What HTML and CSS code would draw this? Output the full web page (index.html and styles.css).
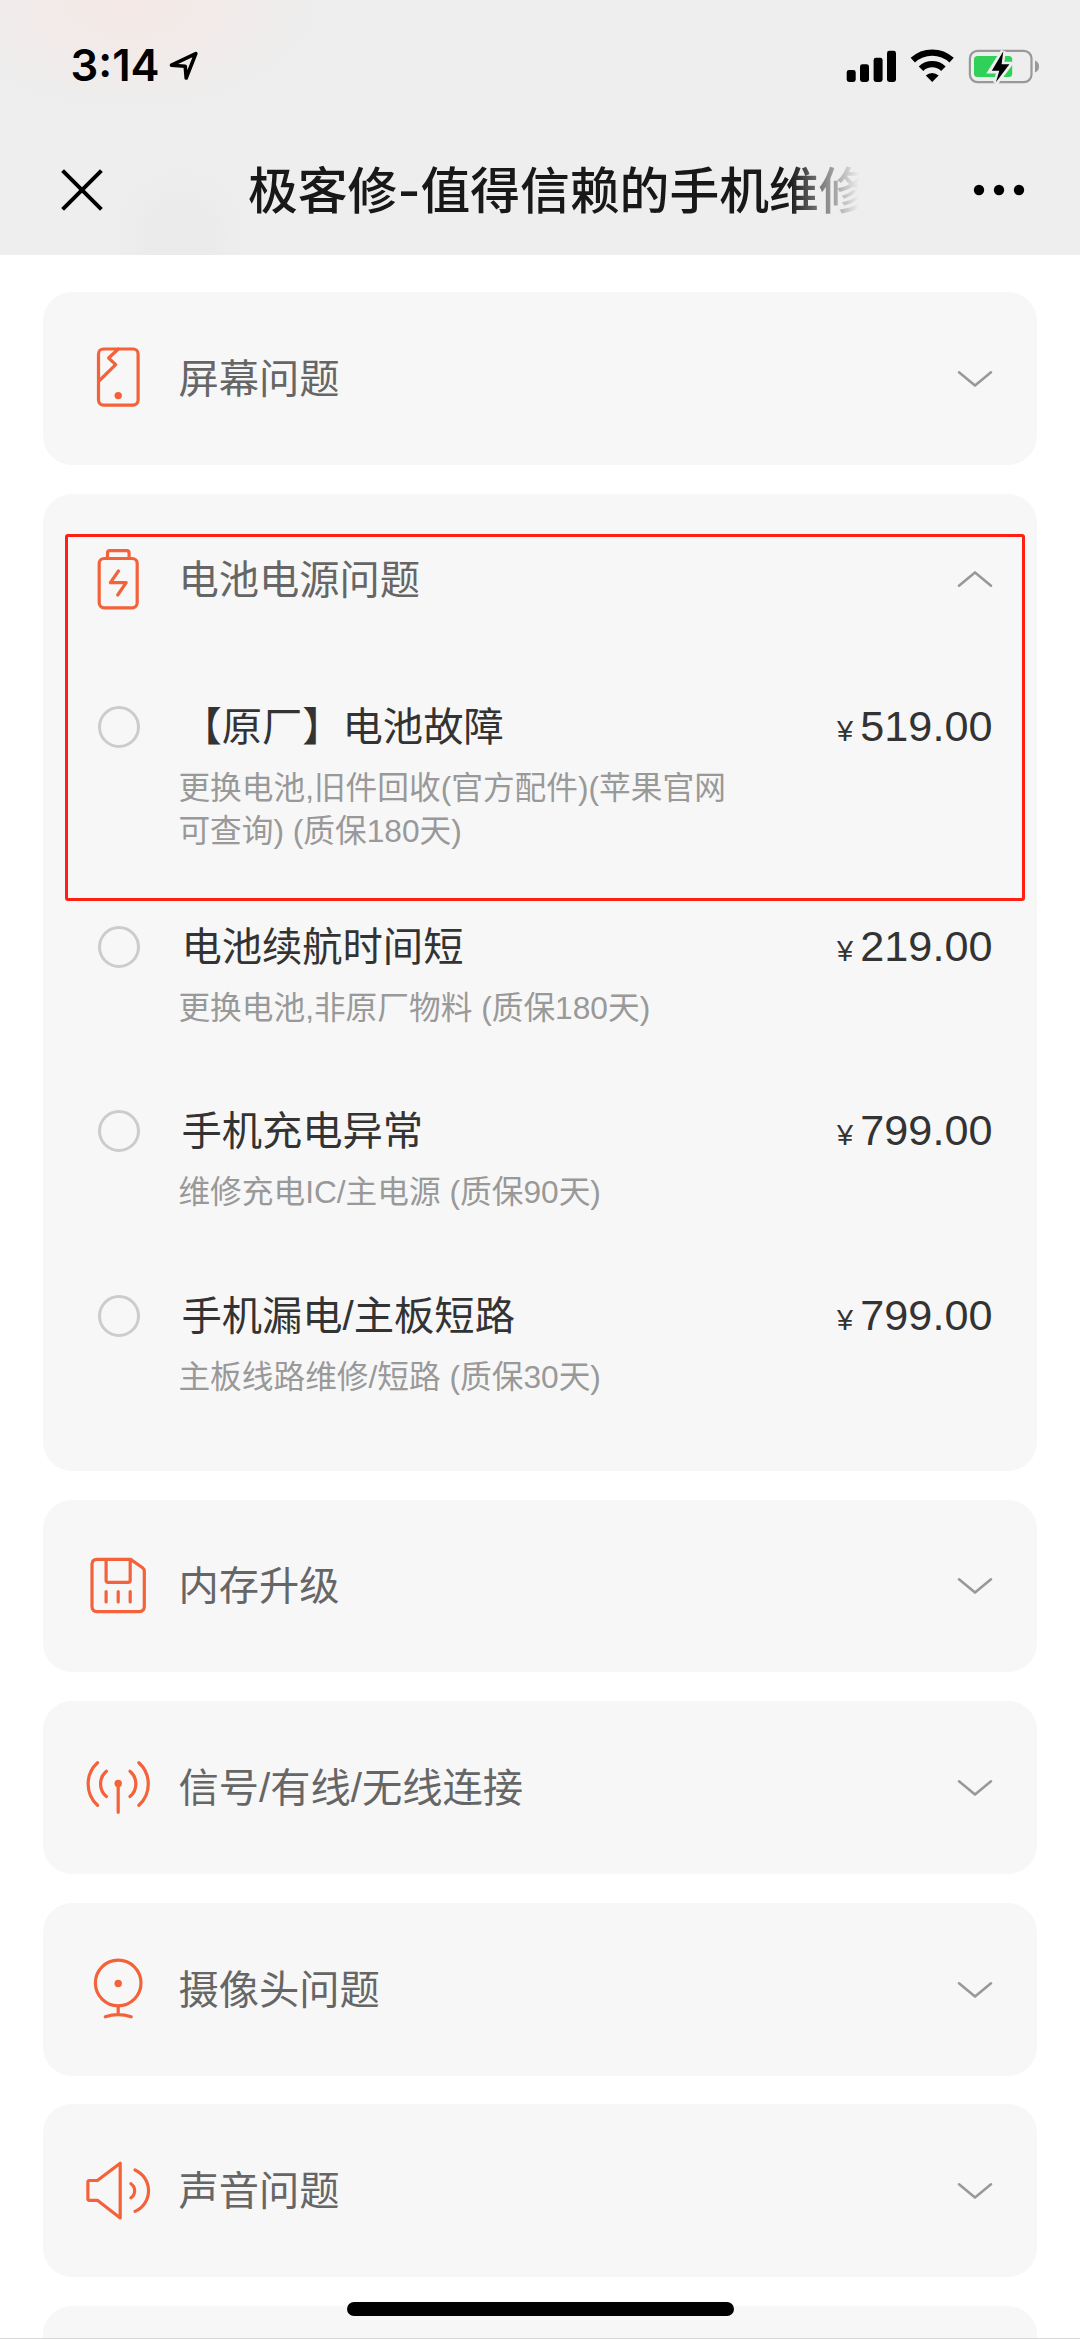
FILE: index.html
```html
<!DOCTYPE html>
<html lang="zh-CN">
<head>
<meta charset="utf-8">
<title>极客修</title>
<link rel="stylesheet" href="styles.css">
</head>
<body>
<svg class="defs" aria-hidden="true">
  <symbol id="chevron" viewBox="0 0 36 18"><path d="M2 2.3 18 15.6 34 2.3"/></symbol>
</svg>
<div class="screen">
  <header class="topbar">
    <div class="status">
      <div class="status-left">
        <span class="time">3:14</span>
        <svg class="location" viewBox="0 0 30 32"><path d="M2.5 15.2 26.8 3.6 17.2 28 16.2 16.2Z"/></svg>
      </div>
      <svg class="status-icons" width="194" height="36" viewBox="0 0 194 36">
        <g>
          <rect x=".7" y="22" width="9" height="12" rx="2.4"/>
          <rect x="14" y="16.3" width="9" height="17.7" rx="2.4"/>
          <rect x="27.6" y="9.8" width="9" height="24.2" rx="2.4"/>
          <rect x="41" y="2.8" width="9" height="31.2" rx="2.4"/>
        </g>
        <g class="wifi">
          <path d="M66.8 12.2a28.6 28.6 0 0 1 38.8 0"/>
          <path d="M75 20.7a16 16 0 0 1 22.4 0"/>
          <path class="wifi-dot" d="M79.8 27.6a9.3 9.3 0 0 1 12.8 0l-6.4 6.5Z"/>
        </g>
        <rect class="battery-shell" x="123.9" y="2.9" width="61.6" height="31.2" rx="7.6"/>
        <path class="battery-tip" d="M189 12.4q4 1.4 4 6t-4 6Z"/>
        <rect class="battery-fill" x="128" y="8" width="38.2" height="21" rx="3.5"/>
        <path class="bolt" d="M157.3 3.2 144.8 22.9H153.3L149.7 35 163.8 16.2H155.6Z"/>
        <path d="M157.3 3.2 145.8 22.7H153.3L149.9 34.3 163.4 16.2H155.6Z"/>
      </svg>
    </div>
    <div class="nav">
      <svg class="close" viewBox="0 0 42 42"><path d="M1.6 1.6 40.4 40.4M40.4 1.6 1.6 40.4"/></svg>
      <h1 class="page-title">极客修-值得信赖的手机维修</h1>
      <svg class="more" viewBox="0 0 52 12"><circle cx="6" cy="6" r="5.2"/><circle cx="26" cy="6" r="5.2"/><circle cx="46" cy="6" r="5.2"/></svg>
    </div>
  </header>

  <main class="list">
    <section class="card">
      <div class="card-head">
        <svg class="icon" viewBox="0 0 72 72"><rect x="16.5" y="7" width="39.6" height="56.1" rx="5"/><path d="M36.3 7 26.6 16 33.7 22.6 17 39"/><circle class="dot" cx="36.2" cy="53.6" r="3.7"/></svg>
        <h2>屏幕问题</h2>
        <svg class="chevron"><use href="#chevron"/></svg>
      </div>
    </section>

    <section class="card card-open">
      <div class="card-head">
        <svg class="icon" viewBox="0 0 72 72"><rect x="17.2" y="14.5" width="38" height="49.3" rx="5"/><path d="M25.5 14.5V9.2q0-2.5 2.5-2.5H44.6q2.5 0 2.5 2.5V14.5M36.5 27 28.4 38.7H44.2L35.7 51"/></svg>
        <h2>电池电源问题</h2>
        <svg class="chevron up"><use href="#chevron"/></svg>
      </div>
      <ul class="options">
        <li class="option option-tall">
          <span class="radio"></span>
          <div class="option-body">
            <h3>【原厂】电池故障</h3>
            <p>更换电池,旧件回收(官方配件)(苹果官网<br>可查询) (质保180天)</p>
          </div>
          <div class="price"><small>¥</small>519.00</div>
        </li>
        <li class="option">
          <span class="radio"></span>
          <div class="option-body">
            <h3>电池续航时间短</h3>
            <p>更换电池,非原厂物料 (质保180天)</p>
          </div>
          <div class="price"><small>¥</small>219.00</div>
        </li>
        <li class="option">
          <span class="radio"></span>
          <div class="option-body">
            <h3>手机充电异常</h3>
            <p>维修充电IC/主电源 (质保90天)</p>
          </div>
          <div class="price"><small>¥</small>799.00</div>
        </li>
        <li class="option">
          <span class="radio"></span>
          <div class="option-body">
            <h3>手机漏电/主板短路</h3>
            <p>主板线路维修/短路 (质保30天)</p>
          </div>
          <div class="price"><small>¥</small>799.00</div>
        </li>
      </ul>
      <div class="highlight"></div>
    </section>

    <section class="card">
      <div class="card-head">
        <svg class="icon" viewBox="0 0 72 72"><path d="M15 9.4H48.6L60.6 17.8Q62.3 19 62.3 21.5V56.6q0 5-5 5H15q-5 0-5-5V14.4q0-5 5-5ZM24.1 9.4V30.3q0 2 2 2H46.2q2 0 2-2V9.4M24.1 41.5V52M36.2 41.5V52M48.2 41.5V52"/></svg>
        <h2>内存升级</h2>
        <svg class="chevron"><use href="#chevron"/></svg>
      </div>
    </section>

    <section class="card">
      <div class="card-head">
        <svg class="icon" viewBox="0 0 72 72"><path d="M15.5 10.7a28.9 28.9 0 0 0 0 42.6M24.4 19.3a16.5 16.5 0 0 0 0 25.2M56.9 10.7a28.9 28.9 0 0 1 0 42.6M48 19.3a16.5 16.5 0 0 1 0 25.2M36.2 31.4V60.3"/><circle class="dot" cx="36.2" cy="31.4" r="3.7"/></svg>
        <h2>信号/有线/无线连接</h2>
        <svg class="chevron"><use href="#chevron"/></svg>
      </div>
    </section>

    <section class="card">
      <div class="card-head">
        <svg class="icon" viewBox="0 0 72 72"><circle cx="36.2" cy="30" r="22.8"/><circle class="dot" cx="36.2" cy="30.5" r="3.7"/><path d="M36.2 53V61.3M23.3 63.8q12.9-4.4 25.9 0"/></svg>
        <h2>摄像头问题</h2>
        <svg class="chevron"><use href="#chevron"/></svg>
      </div>
    </section>

    <section class="card">
      <div class="card-head">
        <svg class="icon" viewBox="0 0 72 72"><path d="M38.2 8.2V63L15.4 45.3H7.4q-1.5 0-1.5-1.5V27q0-1.5 1.5-1.5H15.4ZM48.9 28.7a8.6 8.6 0 0 1 0 14.2M53 15a22.6 22.6 0 0 1 0 41.4"/></svg>
        <h2>声音问题</h2>
        <svg class="chevron"><use href="#chevron"/></svg>
      </div>
    </section>

    <section class="card"></section>
  </main>
  <div class="home-indicator"></div>
</div>
</body>
</html>
```
FILE: styles.css
```css
* { box-sizing: border-box; }

body {
  margin: 0;
  background: #fff;
  font-family: "Liberation Sans", "Noto Sans CJK SC", sans-serif;
  text-spacing-trim: space-all;
}

h1, h2, h3, p, ul { margin: 0; padding: 0; font-weight: 400; }
ul { list-style: none; }
svg { display: block; flex: none; }
.defs { position: absolute; width: 0; height: 0; }

.screen {
  position: relative;
  width: 1080px;
  height: 2339px;
  overflow: hidden;
  border-bottom: 1px solid #d9d9d9;
}

/* Status bar and navigation */
.topbar {
  height: 255px;
  background:
    radial-gradient(ellipse 190px 110px at 130px 0, #f4e8e5, rgba(244, 232, 229, 0)),
    radial-gradient(circle at 180px 235px, #ebebeb 0 35px, rgba(235, 235, 235, 0) 65px),
    #eee;
}

.status {
  display: flex;
  justify-content: space-between;
  align-items: center;
  height: 132px;
  padding: 0 40px 0 70.5px;
}

.status-left { display: flex; align-items: center; gap: 9.5px; }
.time { font: 600 43.6px/52px Inter, sans-serif; }
.location { width: 30px; height: 32px; fill: none; stroke: #000; stroke-width: 3.6; stroke-linejoin: round; }
.wifi path { fill: none; stroke: #000; stroke-width: 6.4; }
.wifi .wifi-dot { fill: #000; stroke: none; }
.battery-shell { fill: none; stroke: #999; stroke-width: 2.2; }
.battery-tip { fill: #999; }
.battery-fill { fill: #30d158; }
.bolt { stroke: #eee; stroke-width: 5; fill: #eee; }

.nav {
  display: flex;
  align-items: center;
  height: 116px;
  padding: 0 55px 0 60.5px;
}

.close { width: 42px; height: 42px; stroke: #000; stroke-width: 4; }

.page-title {
  width: 611px;
  margin: 2px 0 0 145.5px;
  overflow: hidden;
  white-space: nowrap;
  font: 500 49.8px/70px Inter, "Noto Sans CJK SC", sans-serif;
  color: #181818;
  -webkit-mask-image: linear-gradient(90deg, #000 88.5%, transparent 100%);
  mask-image: linear-gradient(90deg, #000 88.5%, transparent 100%);
}

.more { width: 52px; height: 12px; margin-left: auto; }

/* Problem categories */
.list {
  display: flex;
  flex-direction: column;
  gap: 28.8px;
  padding: 37px 43.2px 0;
}

.card {
  flex: none;
  min-height: 172.8px;
  border-radius: 28.8px;
  background: #f7f7f7;
}

.card-open { position: relative; height: 977.2px; }

.card-head {
  display: flex;
  align-items: center;
  height: 172.8px;
  padding: 0 43.6px 0 38.8px;
}

.icon {
  width: 72px;
  height: 72px;
  fill: none;
  stroke: #f4623a;
  stroke-width: 3.2;
  stroke-linecap: round;
  stroke-linejoin: round;
}

.icon .dot { fill: #f4623a; stroke: none; }

.card-head h2 {
  flex: 1;
  margin: 3px 0 0 24.4px;
  font-size: 40.3px;
  line-height: 58px;
  color: #666;
}

.chevron {
  width: 36px;
  height: 18px;
  margin-top: 1px;
  fill: none;
  stroke: #999;
  stroke-width: 2.6;
  stroke-linecap: round;
  stroke-linejoin: round;
}

.chevron.up { margin-top: -2px; transform: rotate(180deg); }

/* Repair options */
.options { padding: 31.6px 44.4px 0 54.9px; }
.option { display: flex; height: 184.4px; }
.option-tall { height: 220.3px; }

.radio {
  flex: none;
  width: 42px;
  height: 42px;
  margin-top: 7.8px;
  border: 3px solid #ccc;
  border-radius: 50%;
}

.option-body { flex: 1; margin: .8px 0 0 38.3px; }
.option-body h3 { padding-left: 3px; font-size: 40.3px; line-height: 58px; color: #333; }
.option-body p { margin-top: 10px; font-size: 31.7px; line-height: 43.2px; color: #999; }

.price { margin-top: -1.4px; font-size: 43.2px; line-height: 58px; color: #333; }
.price small { margin-right: 7.4px; font-size: 28.8px; }

.highlight {
  position: absolute;
  left: 21.8px;
  top: 40.4px;
  width: 960px;
  height: 367px;
  border: 3px solid #ff2013;
  border-radius: 3px;
}

.home-indicator {
  position: absolute;
  left: 347px;
  bottom: 22px;
  width: 387px;
  height: 14.4px;
  border-radius: 7.2px;
  background: #000;
}
```
